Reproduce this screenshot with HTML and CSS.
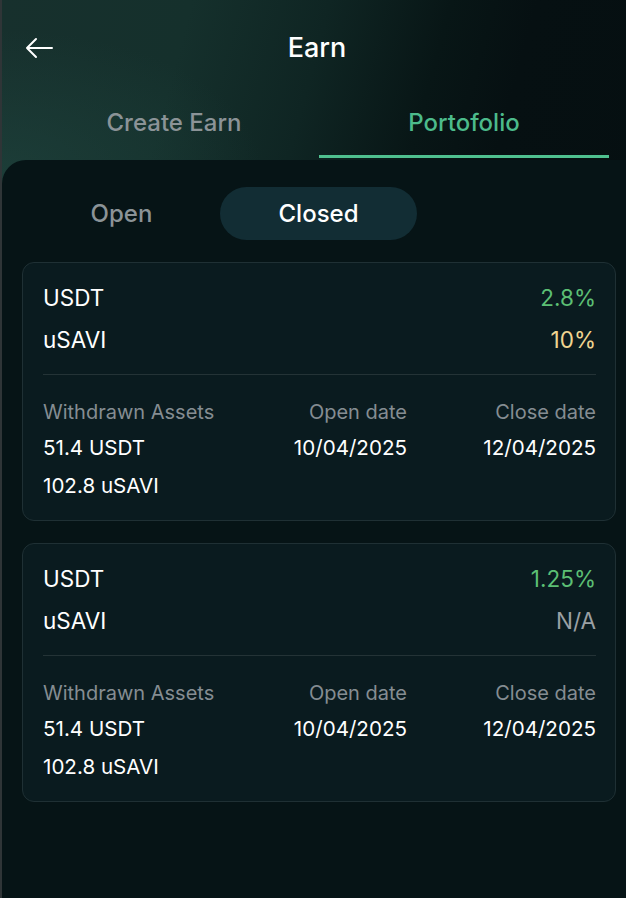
FILE: index.html
```html
<!DOCTYPE html>
<html>
<head>
<meta charset="utf-8">
<link rel="stylesheet" href="styles.css">
</head>
<body>
<div class="app">
  <header class="topbar">
    <button class="back" aria-label="Back">
      <svg width="28" height="22" viewBox="0 0 28 22" fill="none" stroke="#ffffff" stroke-width="2" stroke-linecap="round" stroke-linejoin="round"><path d="M27 11H2M11 2L2 11L11 20"/></svg>
    </button>
    <h1 class="title">Earn</h1>
  </header>
  <nav class="tabs">
    <div class="tab">Create Earn</div>
    <div class="tab active">Portofolio</div>
  </nav>
  <main class="panel">
    <div class="segment">
      <div class="seg">Open</div>
      <div class="seg active">Closed</div>
    </div>
    <section class="card">
      <div class="row"><span>USDT</span><span class="green">2.8%</span></div>
      <div class="row"><span>uSAVI</span><span class="yellow">10%</span></div>
      <div class="divider"></div>
      <div class="grid">
        <div class="label">Withdrawn Assets</div>
        <div class="label r">Open date</div>
        <div class="label r">Close date</div>
        <div class="val">51.4 USDT</div>
        <div class="val r">10/04/2025</div>
        <div class="val r">12/04/2025</div>
        <div class="val">102.8 uSAVI</div>
      </div>
    </section>
    <section class="card">
      <div class="row"><span>USDT</span><span class="green">1.25%</span></div>
      <div class="row"><span>uSAVI</span><span class="gray">N/A</span></div>
      <div class="divider"></div>
      <div class="grid">
        <div class="label">Withdrawn Assets</div>
        <div class="label r">Open date</div>
        <div class="label r">Close date</div>
        <div class="val">51.4 USDT</div>
        <div class="val r">10/04/2025</div>
        <div class="val r">12/04/2025</div>
        <div class="val">102.8 uSAVI</div>
      </div>
    </section>
  </main>
</div>
</body>
</html>
```
FILE: styles.css
```css
* { box-sizing: border-box; }
html, body { margin: 0; padding: 0; }
body {
  font-family: Inter, "Noto Sans", sans-serif;
  color: #ffffff;
  background: #061113;
}
.app {
  width: 626px;
  height: 898px;
  border-left: 2px solid #2f3537;
  background:
    radial-gradient(ellipse 260px 140px at 0px 170px, rgba(30,66,60,0.7) 0%, rgba(30,66,60,0) 100%),
    linear-gradient(105deg, #17302d 0%, #15302c 22%, #0f2523 38%, #081616 52%, #061012 62%, #050e10 100%);
  display: flex;
  flex-direction: column;
  overflow: hidden;
}
.topbar {
  height: 88px;
  position: relative;
  display: flex;
  justify-content: center;
  padding-top: 33px;
}
.back {
  position: absolute;
  left: 23px;
  top: 37px;
  background: none;
  border: 0;
  padding: 0;
  display: flex;
}
.title {
  margin: 0 0 0 6px;
  font-size: 27px;
  line-height: 30px;
  font-weight: 500;
}
.tabs {
  display: grid;
  grid-template-columns: 1fr 1fr;
  margin: 0 17px 0 27px;
}
.tab {
  height: 70px;
  padding-top: 20px;
  text-align: center;
  font-size: 24px;
  line-height: 30px;
  font-weight: 500;
  color: #8b9397;
  border-bottom: 3px solid transparent;
}
.tab.active {
  color: #4cbb8b;
  border-bottom-color: #4fc08f;
}
.panel {
  flex: 1;
  margin-top: 2px;
  background: #061416;
  border-radius: 24px 0 0 0;
  padding: 27px 10px 0 20px;
}
.segment {
  display: flex;
  margin-left: 1px;
}
.seg {
  width: 197px;
  height: 53px;
  display: flex;
  align-items: center;
  justify-content: center;
  font-size: 24px;
  font-weight: 500;
  color: #8b9397;
  border-radius: 27px;
}
.seg.active {
  background: #122d34;
  color: #ffffff;
}
.card {
  margin-top: 22px;
  background: #0a1b1f;
  border: 1px solid #1f3034;
  border-radius: 12px;
  padding: 19px 19px 20px 20px;
}
.row {
  display: flex;
  justify-content: space-between;
  font-size: 22.5px;
  line-height: 32px;
  font-weight: 400;
}
.row + .row { margin-top: 10px; }
.green { color: #5cbf74; }
.yellow { color: #f0d591; }
.gray { color: #9aa0a4; }
.divider {
  height: 1px;
  background: #243336;
  margin-top: 18px;
}
.grid {
  display: grid;
  grid-template-columns: 1fr 150px 189px;
  margin-top: 23px;
  row-gap: 8px;
}
.label {
  font-size: 20px;
  line-height: 28px;
  color: #858d92;
}
.val {
  font-size: 20.6px;
  line-height: 28px;
  font-weight: 400;
}
.grid .val:nth-child(n+7) { margin-top: 2px; }
.r { text-align: right; }
```
